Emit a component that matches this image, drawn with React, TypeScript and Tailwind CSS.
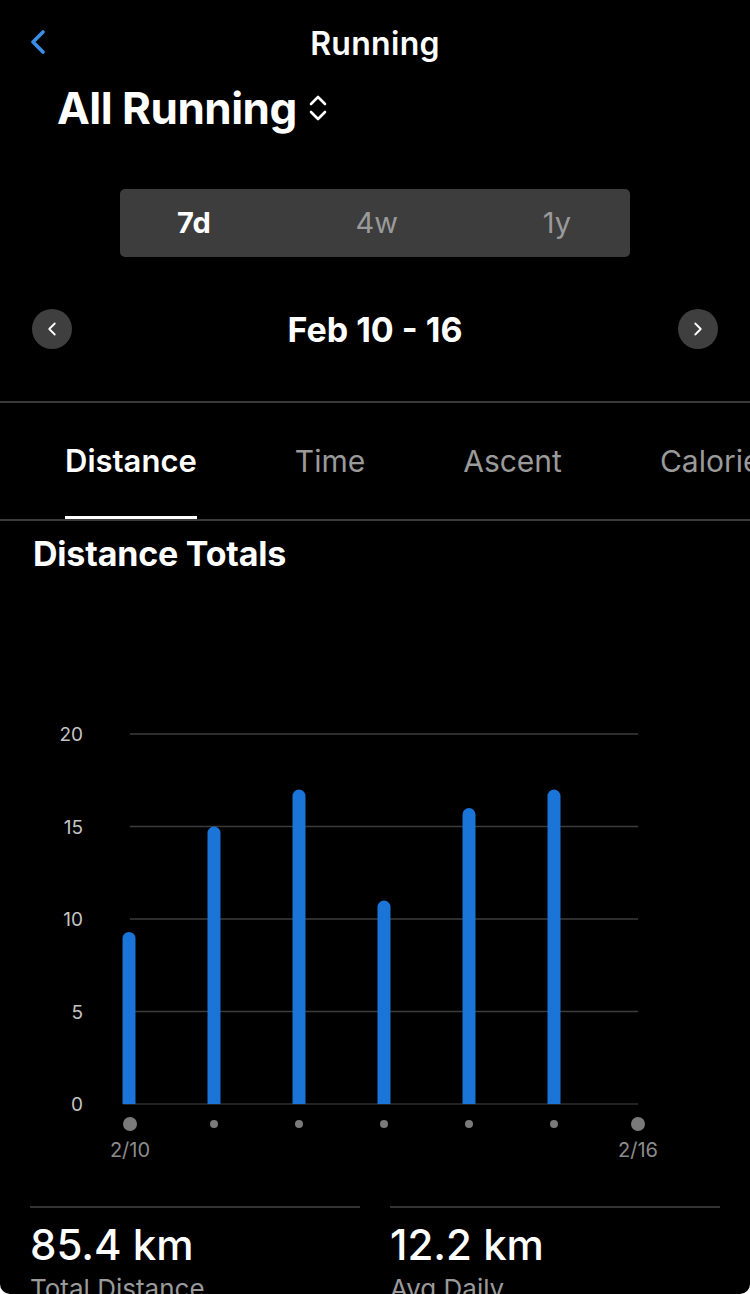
import { ChevronLeft, ChevronRight } from "lucide-react";

const values = [9.3, 15, 17, 11, 16, 17, 0];

// chart coordinates (svg space, origin at top of chart block)
const GRID_LEFT = 130;
const GRID_RIGHT = 638;
const BASE_Y = 519;
const UNIT = 18.5;
const STEP = 85;

const Chart = () => {
    return (
        <svg width="750" height="600" viewBox="0 0 750 600" className="block">
            {[20, 15, 10, 5].map(v => (
                <line key={v} x1={GRID_LEFT} x2={GRID_RIGHT} y1={BASE_Y - v * UNIT} y2={BASE_Y - v * UNIT} stroke="#3c3c3c" strokeWidth="1.5" />
            ))}
            <line x1={123} x2={GRID_RIGHT} y1={BASE_Y} y2={BASE_Y} stroke="#2e2e2e" strokeWidth="1.5" />
            {[20, 15, 10, 5, 0].map(v => (
                <text key={v} x={83} y={BASE_Y - v * UNIT + 7} textAnchor="end" fill="#c4c4c4" fontSize="19" fontFamily="Inter, sans-serif">{v}</text>
            ))}
            {values.map((v, i) => {
                const cx = 129 + i * STEP;
                if (!v) return null;
                const top = BASE_Y - v * UNIT;
                return (
                    <path key={i} d={`M${cx - 6.5} ${BASE_Y} V${top + 6.5} A6.5 6.5 0 0 1 ${cx + 6.5} ${top + 6.5} V${BASE_Y} Z`} fill="#1b74d8" />
                );
            })}
            {values.map((_, i) => {
                const cx = i === 0 ? 130 : i === 6 ? 638 : 129 + i * STEP;
                const big = i === 0 || i === 6;
                return <circle key={i} cx={cx} cy={539} r={big ? 7 : 4} fill="#7a7a7a" />;
            })}
            <text x={130} y={572} textAnchor="middle" fill="#8c8c8c" fontSize="20" fontFamily="Inter, sans-serif">2/10</text>
            <text x={638} y={572} textAnchor="middle" fill="#8c8c8c" fontSize="20" fontFamily="Inter, sans-serif">2/16</text>
        </svg>
    );
};

const Stat = ({ value, label }: { value: string; label: string }) => {
    return (
        <div className="border-t-2 border-[#333333] pt-[10px]">
            <div className="text-[42px] font-medium leading-[54px] text-white">{value}</div>
            <div className="text-[26px] leading-[34px] text-[#9a9a9a]">{label}</div>
        </div>
    );
};

export default function App() {
    const tabs = ["Distance", "Time", "Ascent", "Calories"];

    return (
        <div className="h-[1294px] w-[750px] overflow-hidden bg-white" style={{ fontFamily: "Inter, 'Noto Sans', sans-serif" }}>
            <div className="h-full overflow-hidden rounded-b-[10px] bg-black">
                {/* nav bar */}
                <div className="relative flex h-[64px] items-end justify-center">
                    <ChevronLeft className="absolute left-[18px] top-[22px] text-[#3a8ee6]" size={40} strokeWidth={2.2} />
                    <span className="text-[32px] font-semibold leading-[40px] tracking-[0.3px] text-white">Running</span>
                </div>

                {/* activity picker */}
                <div className="flex h-[88px] items-center gap-[10px] pl-[57px]">
                    <span className="text-[44px] font-bold tracking-[-0.5px] text-white">All Running</span>
                    <svg width="22" height="30" viewBox="0 0 22 30" fill="none" stroke="white" strokeWidth="2.6" strokeLinecap="round" strokeLinejoin="round">
                        <path d="M4 11 L11 4 L18 11" />
                        <path d="M4 19 L11 26 L18 19" />
                    </svg>
                </div>

                {/* segmented control */}
                <div className="mt-[37px] flex justify-center">
                    <div className="flex h-[68px] w-[510px] items-center justify-between rounded-[5px] bg-[#3d3d3d] pl-[57px] pr-[59px] text-[29px]">
                        <span className="font-bold text-white">7d</span>
                        <span className="text-[#9a9a9a]">4w</span>
                        <span className="text-[#9a9a9a]">1y</span>
                    </div>
                </div>

                {/* date range */}
                <div className="mt-[52px] flex h-[40px] items-center justify-between px-[32px]">
                    <div className="flex h-[40px] w-[40px] items-center justify-center rounded-full bg-[#3f3f3f]">
                        <ChevronLeft className="text-white" size={22} strokeWidth={2} />
                    </div>
                    <span className="text-[34px] font-bold text-white">Feb 10 - 16</span>
                    <div className="flex h-[40px] w-[40px] items-center justify-center rounded-full bg-[#3f3f3f]">
                        <ChevronRight className="text-white" size={22} strokeWidth={2} />
                    </div>
                </div>

                {/* metric tabs */}
                <div className="mt-[52px] border-y-2 border-[#3a3a3a]">
                    <div className="flex h-[116px] gap-[98px] overflow-hidden whitespace-nowrap pl-[65px]">
                        {tabs.map((tab, i) => (
                            <div key={tab} className={`flex h-full items-center ${i === 0 ? 'border-b-[3px] border-white pt-[3px] text-[31px] font-semibold text-white' : 'text-[30px] font-normal text-[#9a9a9a]'}`}>
                                {tab}
                            </div>
                        ))}
                    </div>
                </div>

                {/* totals */}
                <div className="flex h-[64px] items-center pl-[33px]">
                    <span className="text-[34px] font-bold tracking-[-0.2px] text-white">Distance Totals</span>
                </div>

                <Chart />

                <div className="mt-[21px] grid grid-cols-2 gap-[30px] px-[30px]">
                    <Stat value="85.4 km" label="Total Distance" />
                    <Stat value="12.2 km" label="Avg Daily" />
                </div>
            </div>
        </div>
    );
}
